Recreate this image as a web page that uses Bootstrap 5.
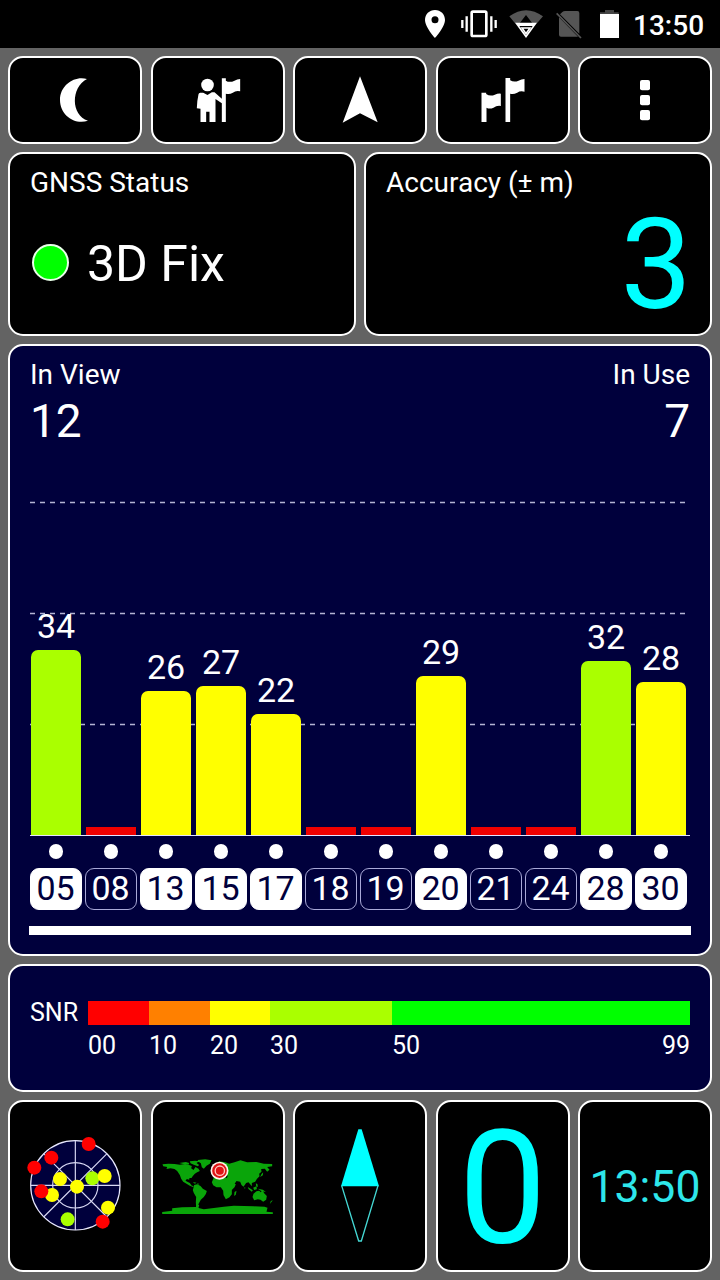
<!DOCTYPE html>
<html lang="en">
<head>
<meta charset="utf-8">
<meta name="viewport" content="width=device-width, initial-scale=1">
<title>GNSS Status</title>
<link href="https://cdn.jsdelivr.net/npm/bootstrap@5.3.0/dist/css/bootstrap.min.css" rel="stylesheet">
<style>
  body { font-family: Roboto, "Noto Sans", sans-serif; background: #636363; color: #fff; line-height: 1; overflow: hidden; }
  .screen { width: 720px; height: 1280px; }
  .statusbar { height: 48px; padding-right: 15px; }
  .clock { font-size: 28px; font-weight: 500; width: 72px; padding-top: 3px; margin-left: 7px; }
  .cells { display: grid; gap: 8.5px; padding: 0 8px; }
  .cells.five { grid-template-columns: repeat(5, 134px); }
  .cells.two { grid-template-columns: repeat(2, 348px); gap: 8px; }
  .tile { background: #000; border: 2px solid #fff; border-radius: 15px; color: inherit; padding: 0; }
  .tile svg { display: block; width: 100%; height: 100%; }
  .tools .tile { height: 88px; }
  .info .tile { height: 184px; padding: 15px 20px 0; }
  .apps .tile { height: 172px; }
  .navy { background: #00003c; margin: 0 8px; }
  .label { font-size: 28px; }
  .cyan { color: #0ff; }
  .fix { margin-top: 42px; gap: 18px; }
  .lamp { width: 37px; height: 37px; border: 2px solid #e8ffe8; background: #0f0; margin: -3px 0 0 2px; }
  .fix-text { font-size: 50px; }
  .acc { font-size: 127px; margin: 4px -2px 0 0; }
  .sats { height: 612px; padding: 15px 0 0; }
  .inset { padding: 0 20px; }
  .counts { font-size: 46px; line-height: 46px; margin-top: 9px; }
  .chart { height: 391px; margin: 0 0 0 18.5px; width: 660px; }
  .sats .gridlines { left: 1.5px; bottom: 0; width: 660px; height: 400px; }
  .slot { width: 55px; }
  .val { font-size: 34px; margin-bottom: 7px; }
  .bar { width: 50px; border-radius: 7px 7px 0 0; }
  .bar.weak { border-radius: 0; }
  .axis { height: 1px; background: #e4e4ff; width: 660px; margin-left: 20px; position: relative; }
  .pin { width: 14.5px; height: 15px; background: #fff; }
  .dots { margin: 8px 0 0 18.5px; width: 660px; }
  .chip { width: 52px; height: 41.5px; border: 1px solid #a9a9d8; border-radius: 9px; font-size: 34px; padding-bottom: 2px; }
  .chip.used { background: #fff; border-color: #fff; color: #00003c; }
  .chips { margin: 9px 0 0 18px; width: 660px; }
  .scroll { height: 9px; width: 662px; margin: 16px 0 0 19px; background: #fff; }
  .snr { height: 128px; font-size: 25px; padding: 34.5px 20px 0; }
  .snr-name { width: 58px; margin-top: -1px; }
  .scale { height: 24px; flex: 1; }
  .ticks { padding-left: 58px; margin-top: 8.5px; }
  .zero { font-size: 157px; line-height: 172px; }
  .time { font-size: 44.5px; line-height: 171px; color: #2ee6ea; }
</style>
</head>
<body>
<div class="screen d-flex flex-column">
  <header class="statusbar bg-black d-flex align-items-center justify-content-end">
    <svg width="32" height="48" viewBox="60 0 96 144"><path fill="#fff" fill-rule="evenodd" d="M105 30c-17 0-30 13-30 30 0 21 30 54 30 54s30-33 30-54c0-17-13-30-30-30zm0 19a10.500 10.500 0 1 1 0 21 10.500 10.500 0 0 1 0-21z"/></svg>
    <svg width="52" height="48" viewBox="156 0 156 144"><rect x="215" y="35" width="44" height="73" rx="4" fill="none" stroke="#fff" stroke-width="8"/><path stroke="#fff" stroke-width="7" d="M200 49V95M187 60V84M274 49V95M287 60V84"/></svg>
    <svg width="44" height="48" viewBox="312 0 132 144"><path fill="#555" d="M328 49Q378 13 429 49L411 70H397L378 45L359 70H345z"/><path fill="#fff" fill-rule="evenodd" d="M345 68H411L378 114zM358 78L378 105L398 78z"/><path fill="none" stroke="#fff" stroke-width="5" d="M366 84H390L378 101z"/></svg>
    <svg width="42" height="48" viewBox="444 0 126 144"><path fill="#555" d="M496 33H532Q538 33 538 39V101L480 43L487 36Q490 33 496 33zM477 52L534 110H483Q477 110 477 104z"/><path stroke="#555" stroke-width="5" d="M470 40L543 114"/></svg>
    <svg width="36" height="48" viewBox="570 0 108 144"><path fill="#444" d="M615 30H642V37H656V44H600V37H615z"/><path fill="#fff" d="M600 42H657V114H600z"/></svg>
    <div class="clock">13:50</div>
  </header>

  <nav class="cells five tools mt-2">
    <button class="tile" aria-label="Night mode"><svg viewBox="30 24 390 252"><path fill="#fff" d="M261 87C225 76 180 104 180 150S225 226 264 212C212 196 212 112 261 87z"/></svg></button>
    <button class="tile" aria-label="Position"><svg viewBox="457.500 24 390 252"><g fill="#fff"><circle cx="621" cy="105" r="19"/><path d="M599 128H608L621 135L634 127H642L664 146V85H676V92Q687 99 702 92Q710 88 719 87V124Q706 121 697 128Q687 134 676 131V216H664V160L645 147V216H627V185H617V216H600V176L589 175Q590 150 594 133Q595 128 599 128z"/></g></svg></button>
    <button class="tile" aria-label="Navigate"><svg viewBox="15 24 390 252"><path fill="#fff" d="M210 79L263 217L210 190L158 218z"/></svg></button>
    <button class="tile" aria-label="Route"><svg viewBox="442.500 24 390 252"><path fill="#fff" d="M573 128H587V132Q599 140 613 134Q622 130 631 131V168Q619 166 609 173Q597 178 588 173V216H573zM645 84H659V91Q671 98 684 92Q693 87 702 87V125Q690 121 680 128Q669 134 659 131V216H645z"/></svg></button>
    <button class="tile" aria-label="Menu"><svg viewBox="870 24 390 252"><g fill="#fff"><rect x="1050" y="90" width="30" height="31" rx="6"/><rect x="1050" y="135" width="30" height="31" rx="6"/><rect x="1050" y="180" width="30" height="31" rx="6"/></g></svg></button>
  </nav>

  <section class="cells two info mt-2">
    <div class="tile">
      <div class="label">GNSS Status</div>
      <div class="fix d-flex align-items-center"><span class="lamp rounded-circle"></span><span class="fix-text">3D Fix</span></div>
    </div>
    <div class="tile">
      <div class="label">Accuracy (± m)</div>
      <div class="acc cyan text-end">3</div>
    </div>
  </section>

  <section class="tile navy sats mt-2">
    <div class="label inset d-flex justify-content-between"><span>In View</span><span>In Use</span></div>
    <div class="counts inset d-flex justify-content-between"><span>12</span><span>7</span></div>
    <div class="chart position-relative">
      <svg class="gridlines position-absolute" viewBox="0 0 660 400"><path stroke="#b4b4d4" stroke-width="1.500" stroke-dasharray="5 5" d="M0 67.500H656M0 178.500H656M0 289.500H656"/></svg>
      <div class="d-flex h-100 align-items-end position-relative" id="bars"></div>
    </div>
    <div class="axis"></div>
    <div class="dots d-flex" id="dots"></div>
    <div class="chips d-flex" id="chips"></div>
    <div class="scroll"></div>
  </section>

  <section class="tile navy snr mt-2">
    <div class="d-flex align-items-center"><span class="snr-name">SNR</span><div class="scale d-flex" id="scale"></div></div>
    <div class="ticks d-flex" id="ticks"></div>
  </section>

  <nav class="cells five apps mt-2">
    <div class="tile"><svg viewBox="30 21 390 504">
      <circle cx="226" cy="271" r="134" fill="#00003c" stroke="#e8e8ff" stroke-width="3.500"/>
      <g fill="none" stroke="#d8d8f4" stroke-width="3.500"><circle cx="226" cy="271" r="68"/><path d="M226 137V405M92 271H360M131 366L321 176M131 176L321 366"/></g>
      <g fill="#f00"><circle cx="266" cy="147" r="21"/><circle cx="154" cy="188" r="21"/><circle cx="103" cy="218" r="21"/></g>
      <circle cx="156" cy="300" r="21" fill="#ff0"/><circle cx="124" cy="289" r="21" fill="#f00"/>
      <circle cx="277" cy="250" r="21" fill="#af0"/><circle cx="203" cy="373" r="21" fill="#af0"/>
      <g fill="#ff0"><circle cx="180" cy="252" r="21"/><circle cx="231" cy="275" r="21"/><circle cx="314" cy="243" r="21"/><circle cx="324" cy="338" r="21"/></g>
      <circle cx="308" cy="380" r="21" fill="#f00"/>
    </svg></div>
    <div class="tile"><svg viewBox="-22.500 -159 390 504">
      <g fill="#0aa50a">
        <path d="M6 28L24 26L42 27L58 29L74 27L86 30L94 33L92 40L99 45L105 36L114 41L118 48L110 52L103 56L97 63L93 69L87 69L86 74L79 72L75 77L82 81L88 84L94 92L100 93L97 96L88 92L78 86L68 80L62 71L58 60L50 48L42 42L30 40L18 42L20 36L8 34z"/>
        <path d="M56 24L76 21L86 24L84 29L68 27zM88 19L104 17L116 19L108 24L116 30L112 34L100 29L90 25zM112 15L134 13L153 16L148 26L138 32L130 41L124 37L121 25L112 19z"/>
        <path d="M97 81L108 83L103 86zM110 85L117 87L112 89z"/>
        <path d="M101 90L110 88L120 93L127 101L139 108L136 117L130 126L121 134L116 143L112 151L113 160L107 158L106 142L107 126L100 114L97 106z"/>
        <path d="M161 65L180 62L199 69L213 72L218 84L226 88L222 97L214 105L214 118L207 127L196 133L189 120L188 107L181 97L168 97L158 91L154 82z"/>
        <path d="M222 111L228 107L226 119L221 123z"/>
        <path d="M154 54L160 45L153 38L161 30L176 19L194 22L206 26L222 22L240 16L260 22L288 21L310 26L335 27L335 34L320 36L327 44L320 50L313 41L302 42L303 50L296 56L297 64L289 72L284 80L274 84L274 94L269 88L264 82L257 84L249 95L243 90L239 80L228 78L222 87L210 88L202 74L199 69L202 62L187 62L180 55L172 62L160 63z"/>
        <path d="M252 96L255 99L252 101zM262 96L277 106L274 110L264 102zM278 98L288 94L289 103L281 105zM292 101L307 104L316 111L303 109zM286 85L291 88L292 96L287 94zM303 57L308 52L307 61L299 66z"/>
        <path d="M279 116L288 109L296 107L301 112L306 105L311 115L319 123L317 134L308 140L300 134L292 133L281 136L276 126zM331 138L337 136L328 147z"/>
        <path d="M5 177V171L35 167V160L65 157L106 156L112 148L116 150L114 159L130 163L160 159L190 155L220 152L250 153L280 154L312 155L321 158L318 170L337 172V177z"/>
      </g>
      <circle cx="177" cy="47" r="27" fill="#fff4ec"/><circle cx="177" cy="47" r="22" fill="#e01414"/><circle cx="178" cy="47" r="14" fill="none" stroke="#ffc8c0" stroke-width="4"/>
    </svg></div>
    <div class="tile"><svg viewBox="15 21 390 504"><path fill="#0ff" d="M205 103H215L267 274H153z"/><path fill="none" stroke="#45d8d4" stroke-width="4" d="M155 272L206 438H214L264 272"/></svg></div>
    <div class="tile zero cyan text-center">0</div>
    <div class="tile time text-center">13:50</div>
  </nav>
</div>
<script>
  const sats = [
    ["05", 34, 185, 1], ["08", 0, 8, 0], ["13", 26, 144, 1], ["15", 27, 149, 1],
    ["17", 22, 121, 1], ["18", 0, 8, 0], ["19", 0, 8, 0], ["20", 29, 159, 1],
    ["21", 0, 8, 0], ["24", 0, 8, 0], ["28", 32, 174, 1], ["30", 28, 153, 1]
  ];
  const color = v => v >= 30 ? "#aaff00" : v >= 20 ? "#ffff00" : "#f00000";
  const fill = (id, list) => document.getElementById(id).innerHTML = list.join("");
  fill("bars", sats.map(([, v, h]) =>
    `<div class="slot d-flex flex-column align-items-center">${v ? `<div class="val">${v}</div>` : ""}<div class="bar${v ? "" : " weak"}" style="height:${h}px;background:${color(v)}"></div></div>`));
  fill("dots", sats.map(() => `<div class="slot d-flex justify-content-center"><span class="pin rounded-circle"></span></div>`));
  fill("chips", sats.map(([id, , , used]) =>
    `<div class="slot d-flex justify-content-center"><div class="chip d-flex align-items-center justify-content-center${used ? " used" : ""}">${id}</div></div>`));
  const bands = [["00", 61, "#ff0000"], ["10", 61, "#ff8000"], ["20", 60, "#ffff00"], ["30", 122, "#aaff00"], ["50", 298, "#00ff00"]];
  fill("scale", bands.map(([, w, c]) => `<div style="width:${w}px;background:${c}"></div>`));
  fill("ticks", bands.map(([t, w], i) => `<div class="d-flex justify-content-between" style="width:${w}px"><span>${t}</span>${i === 4 ? "<span>99</span>" : ""}</div>`));
</script>
<script src="https://cdn.jsdelivr.net/npm/bootstrap@5.3.0/dist/js/bootstrap.bundle.min.js"></script>
</body>
</html>
